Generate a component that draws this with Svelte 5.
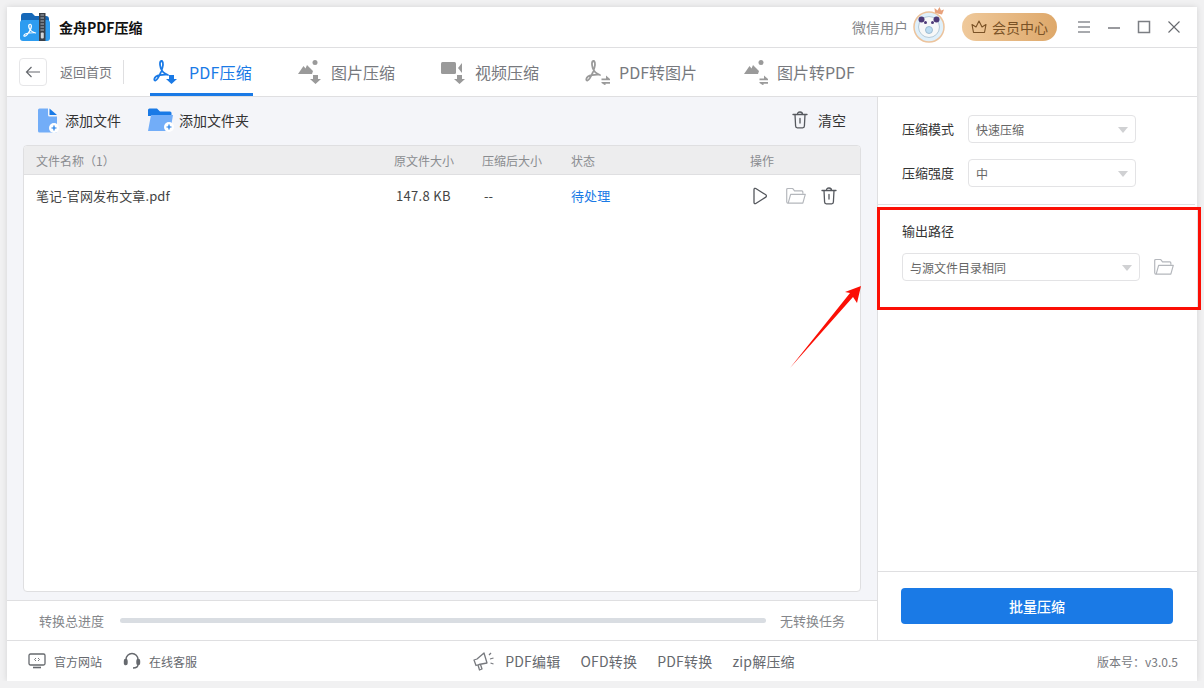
<script lang="ts">
  const tabs = [
    { label: "PDF压缩", icon: "pdf-down", active: true },
    { label: "图片压缩", icon: "img-down" },
    { label: "视频压缩", icon: "video-down" },
    { label: "PDF转图片", icon: "pdf-swap" },
    { label: "图片转PDF", icon: "img-swap" },
  ];
  // adobe-style squiggle, shared by the tab icons and the logo
  const acrobat = "M9.500 2c-1.800 0-2 3.500-.8 7 1 3 3 5.500 7.300 7M10 2c1.500 1.500 1 6-1 11-2 4.500-3.500 8-5.500 8.500-1.800.3-1.500-2.500.5-4 2.500-1.500 6-2 11-1.800";
  const links = ["PDF编辑", "OFD转换", "PDF转换", "zip解压缩"];
</script>

{#snippet folderOutline(w)}
  <svg width={w} height={w * 0.8} viewBox="0 0 22 18" fill="none" stroke="#b4b7bc" stroke-width="1.200" stroke-linejoin="round">
    <path d="M3 16.500a1.500 1.500 0 0 1-1.500-1.500V2.500a1 1 0 0 1 1-1h5l2 2.500h7.500a1 1 0 0 1 1 1v2"/>
    <path d="M3 16.500 5.500 7.500h15l-2.500 9z"/>
  </svg>
{/snippet}

{#snippet trash()}
  <svg width="16" height="18" viewBox="0 0 16 18" fill="none" stroke="#55585e" stroke-width="1.300" stroke-linecap="round" stroke-linejoin="round">
    <path d="M1 3.500h14M5.500 3.500c0-1.500.6-2.500 2.500-2.500s2.500 1 2.500 2.500M3 3.500l.6 11.500c0 1 .8 1.800 1.700 1.800h5.400c.9 0 1.700-.8 1.700-1.800L13 3.500M8 7.500v4.500"/>
  </svg>
{/snippet}

{#snippet tabIcon(kind, color)}
  <svg width="28" height="26" viewBox="0 0 28 26" fill="none">
    {#if kind === "pdf-down" || kind === "pdf-swap"}
      <path d={acrobat} stroke={color} stroke-width="1.800" stroke-linecap="round"/>
    {:else if kind === "img-down" || kind === "img-swap"}
      <path d="M2 15 7.500 7l2 2.500L11 6l6 6-1 3z" fill={color}/>
      <circle cx="19" cy="3.500" r="2.500" fill={color}/>
    {:else}
      <rect x="1" y="3" width="15" height="12" rx="1.500" fill={color}/>
      <path d="M18 9l4-5v10z" fill={color}/>
    {/if}
    {#if kind.endsWith("down")}
      <path d="M17 16h5v4h3l-5.500 5-5.500-5h3z" fill={color}/>
    {:else}
      <path d="M22 16.500l4 3.500v1.300h-8.500V19.500H22zM17.500 23h8.500v1.800h-4.500v1.700l-4-2.500z" fill={color}/>
    {/if}
  </svg>
{/snippet}

<div class="window">
  <header class="titlebar">
    <svg class="logo" width="32" height="30" viewBox="0 0 32 30">
      <path d="M2 4a3 3 0 0 1 3-3h8l3 3h11a3 3 0 0 1 3 3v4H2z" fill="#1668b8"/>
      <rect x="1" y="8" width="30" height="21" rx="3" fill="#2d9cf0"/>
      <path d={acrobat} stroke="#fff" stroke-width="1.600" fill="none" stroke-linecap="round" transform="translate(3 11) scale(.85 .62)"/>
      <rect x="20" y="1" width="6.500" height="28" fill="#3a4048"/>
      <path d="M21.500 3h3.500M21.500 6h3.500M21.500 9h3.500M21.500 12h3.500M21.500 15h3.500M21.500 18h3.500" stroke="#aab2bb" stroke-width="1.200"/>
      <rect x="21.800" y="20.500" width="3" height="6" rx="1" fill="#cfd5da"/>
    </svg>
    <span class="app-name">金舟PDF压缩</span>
    <span class="spacer"></span>
    <span class="user">微信用户</span>
    <svg class="avatar" width="36" height="36" viewBox="0 0 36 36">
      <path d="M24 6l-.5-5 3 2.500L28.500 0l1.500 3.500 3-1-2 5z" fill="#e8a27c"/>
      <circle cx="18" cy="20" r="15" fill="#dff0fb" stroke="#ecc39c" stroke-width="1.500"/>
      <circle cx="18" cy="20" r="10.500" fill="#f7f8f8" stroke="#b5cad8"/>
      <circle cx="10.500" cy="12.500" r="3" fill="#4d3a78"/>
      <circle cx="25.500" cy="12.500" r="3" fill="#4d3a78"/>
      <circle cx="14.500" cy="15.500" r="1.500" fill="#4d3a78"/>
      <circle cx="21.500" cy="15.500" r="1.500" fill="#4d3a78"/>
      <circle cx="18" cy="23" r="3.500" fill="#bcdcf2" stroke="#8fb1c9" stroke-width=".8"/>
    </svg>
    <button class="vip">
      <svg width="16" height="14" viewBox="0 0 16 14" fill="none" stroke="#7a5226" stroke-width="1.100" stroke-linejoin="round">
        <path d="M2.500 12.500 1 4.500l4 2.500L8 1l3 6 4-2.500-1.500 8z"/>
      </svg>
      会员中心
    </button>
    <div class="win-controls">
      <svg width="14" height="14" viewBox="0 0 14 14" stroke="#8c8f94" stroke-width="1.500"><path d="M1 2h12M1 7h12M1 12h12"/></svg>
      <svg width="14" height="14" viewBox="0 0 14 14" stroke="#55585e" stroke-width="1.200"><path d="M1 8h12"/></svg>
      <svg width="14" height="14" viewBox="0 0 14 14" fill="none" stroke="#7b7e83" stroke-width="1.500"><rect x="1.500" y="1.500" width="11" height="11"/></svg>
      <svg width="14" height="14" viewBox="0 0 14 14" stroke="#66696e" stroke-width="1.100"><path d="M1.500 1.500l11 11M12.500 1.500l-11 11"/></svg>
    </div>
  </header>

  <nav class="navbar">
    <button class="back" aria-label="返回首页">
      <svg width="16" height="12" viewBox="0 0 16 12" fill="none" stroke="#66696e" stroke-width="1.200"><path d="M15 6H1.500M6.500 1 1.500 6l5 5"/></svg>
    </button>
    <span class="back-label">返回首页</span>
    <div class="tabs">
      {#each tabs as tab}
        <div class="tab" class:active={tab.active}>
          {@render tabIcon(tab.icon, tab.active ? "#1a7ae6" : "#9a9a9a")}
          <span>{tab.label}</span>
        </div>
      {/each}
    </div>
  </nav>

  <div class="body">
    <main class="left">
      <div class="toolbar">
        <button class="tool first">
          <svg width="22" height="25" viewBox="0 0 22 25">
            <path d="M1 2a1.500 1.500 0 0 1 1.500-1.500H11V7a1.500 1.500 0 0 0 1.500 1.500H20V23a1.500 1.500 0 0 1-1.500 1.500h-16A1.500 1.500 0 0 1 1 23z" fill="#72adf8"/>
            <path d="M12.500.5 20 7h-7.500z" fill="#1a7ae6"/>
            <circle cx="17" cy="20" r="5" fill="#fff"/>
            <path d="M14.500 20h5M17 17.500v5" stroke="#1a7ae6" stroke-width="1.200"/>
          </svg>
          添加文件
        </button>
        <button class="tool second">
          <svg width="26" height="24" viewBox="0 0 26 24">
            <path d="M0 2a1.500 1.500 0 0 1 1.500-1.500H9l3 3h10a1.500 1.500 0 0 1 1.500 1.500v3H0z" fill="#1a7ae6"/>
            <path d="M3 7h22l-2.500 14.500a1.500 1.500 0 0 1-1.500 1.500H0z" fill="#72adf8"/>
            <circle cx="21" cy="19" r="5" fill="#fff"/>
            <path d="M18.500 19h5M21 16.500v5" stroke="#1a7ae6" stroke-width="1.200"/>
          </svg>
          添加文件夹
        </button>
        <span class="spacer"></span>
        <button class="tool clear">
          {@render trash()}
          清空
        </button>
      </div>

      <section class="table">
        <div class="row head">
          <span class="c-name">文件名称（1）</span>
          <span class="c-size">原文件大小</span>
          <span class="c-after">压缩后大小</span>
          <span class="c-state">状态</span>
          <span class="c-ops">操作</span>
        </div>
        <div class="row item">
          <span class="c-name">笔记-官网发布文章.pdf</span>
          <span class="c-size num">147.8 KB</span>
          <span class="c-after dash">--</span>
          <span class="c-state pending">待处理</span>
          <span class="c-ops icons">
            <svg class="play" width="16" height="18" viewBox="0 0 16 18" fill="none" stroke="#55585e" stroke-width="1.300" stroke-linejoin="round"><path d="M2 2.500c0-1 1-1.500 1.800-1l10 6.300c.8.500.8 1.800 0 2.300l-10 6.400c-.8.500-1.800 0-1.800-1z"/></svg>
            {@render folderOutline(22)}
            {@render trash()}
          </span>
        </div>
      </section>

      <div class="progress">
        <span class="p-label">转换总进度</span>
        <div class="bar"></div>
        <span class="p-state">无转换任务</span>
      </div>
    </main>

    <aside class="side">
      <div class="settings">
        <div class="field">
          <span>压缩模式</span>
          <div class="select short">快速压缩<i class="caret"></i></div>
        </div>
        <div class="field">
          <span>压缩强度</span>
          <div class="select short">中<i class="caret"></i></div>
        </div>
      </div>
      <div class="output">
        <div class="out-label">输出路径</div>
        <div class="out-row">
          <div class="select wide">与源文件目录相同<i class="caret"></i></div>
          {@render folderOutline(22)}
        </div>
      </div>
      <span class="grow"></span>
      <div class="action">
        <button class="primary">批量压缩</button>
      </div>
    </aside>
  </div>

  <footer class="footer">
    <div class="foot-left">
      <span class="foot-link">
        <svg width="18" height="16" viewBox="0 0 18 16" fill="none" stroke="#66696e" stroke-width="1.300"><rect x="1" y="1" width="16" height="11" rx="1.500"/><path d="M5 14.500h8" stroke-width="1.600"/><path d="M8 5 6.500 6.500 8 8M10 5l1.500 1.500L10 8" stroke-width=".9"/></svg>
        官方网站
      </span>
      <span class="foot-link">
        <svg width="18" height="18" viewBox="0 0 18 18" fill="none" stroke="#66696e" stroke-width="1.400"><path d="M3 9V7.500a6 6 0 0 1 12 0V9"/><rect x="1.500" y="7.500" width="2.500" height="5" rx="1.200" fill="#66696e"/><rect x="14" y="7.500" width="2.500" height="5" rx="1.200" fill="#66696e"/><path d="M15 12.500c0 2.500-2 3.500-5 3.500"/></svg>
        在线客服
      </span>
    </div>
    <div class="foot-mid">
      <svg width="22" height="20" viewBox="0 0 22 20" fill="none" stroke="#77797e" stroke-width="1.300" stroke-linejoin="round">
        <path d="M1 9l3-1 7-6 3 10-8 1.500-3 1zM5 14l1.500 5 2.500-1-1.500-4.500M16 4l2-2M17 8l3.500-1M17.500 12l3 1"/>
      </svg>
      {#each links as link}<span>{link}</span>{/each}
    </div>
    <span class="version">版本号：v3.0.5</span>
  </footer>
</div>

<!-- screenshot annotation: red box and arrow sit on top of the app -->
<div class="mark-box"></div>
<svg class="mark-arrow" width="76" height="86" viewBox="0 0 76 86">
  <path d="M2 84 62 9 57 8 73 2 69 19 65 13z" fill="#fb0f05"/>
</svg>

<style>
  :global(body) {
    margin: 0;
    background: #f1f1f2;
    font-family: "Noto Sans CJK SC", "Noto Sans", sans-serif;
  }
  .window {
    box-sizing: border-box;
    width: 1190px;
    height: 674px;
    margin: 7px 0 0 7px;
    background: #fff;
    display: flex;
    flex-direction: column;
    box-shadow: 0 0 6px rgba(0, 0, 0, 0.12);
    color: #333;
    font-size: 13px;
  }
  button {
    font: inherit;
    border: 0;
    background: none;
    padding: 0;
    color: inherit;
  }
  .spacer, .grow { flex: 1; }

  .titlebar {
    height: 40px;
    flex: none;
    display: flex;
    align-items: center;
    padding: 0 16px 0 12px;
    border-bottom: 1px solid #dfdfe1;
  }
  .app-name {
    margin-left: 8px;
    font-size: 14px;
    font-weight: 700;
    color: #111;
  }
  .user { color: #85878b; font-size: 14px; }
  .avatar { margin: -4px 0 0 3px; }
  .vip {
    width: 95px;
    height: 28px;
    margin-left: 15px;
    border-radius: 14px;
    background: linear-gradient(90deg, #efc99b, #dea86a);
    color: #7a5226;
    font-size: 14px;
    display: flex;
    align-items: center;
    justify-content: center;
    gap: 5px;
  }
  .win-controls {
    display: flex;
    gap: 16px;
    margin-left: 20px;
  }

  .navbar {
    height: 48px;
    flex: none;
    display: flex;
    align-items: center;
    padding-left: 12px;
    border-bottom: 1px solid #dfdfe1;
  }
  .back {
    width: 28px;
    height: 28px;
    box-sizing: border-box;
    border: 1px solid #e6e6e8;
    border-radius: 4px;
    display: flex;
    align-items: center;
    justify-content: center;
  }
  .back-label {
    margin-left: 13px;
    padding-right: 11px;
    line-height: 24px;
    color: #77797e;
    border-right: 1px solid #dfdfe1;
  }
  .tabs {
    display: flex;
    align-self: stretch;
    margin-left: 26px;
    gap: 45px;
  }
  .tab {
    display: flex;
    align-items: center;
    gap: 7px;
    font-size: 16px;
    color: #77797e;
    box-sizing: border-box;
    border-bottom: 3px solid transparent;
    padding-top: 3px;
  }
  .tab.active {
    color: #1a7ae6;
    border-bottom-color: #1a7ae6;
    gap: 9px;
    padding-right: 1px;
    padding-left: 2px;
    margin-right: -2px;
    letter-spacing: 0.2px;
  }

  .body {
    flex: 1;
    min-height: 0;
    display: flex;
  }
  .left {
    flex: 1;
    min-width: 0;
    display: flex;
    flex-direction: column;
    background: #f4f5f9;
    border-right: 1px solid #dfdfe1;
  }
  .toolbar {
    height: 48px;
    flex: none;
    box-sizing: border-box;
    display: flex;
    align-items: center;
    padding: 0 31px 2px 30px;
  }
  .tool {
    display: flex;
    align-items: center;
    gap: 6px;
    color: #333;
    font-size: 14px;
  }
  .second { margin-left: 27px; gap: 5px; }
  .clear { gap: 10px; }

  .table {
    flex: 1;
    margin: 0 16px 8px 16px;
    background: #fff;
    border: 1px solid #dfdfe1;
    border-radius: 4px;
    overflow: hidden;
  }
  .row {
    display: grid;
    grid-template-columns: 352px 94px 89px 90px 1fr;
    align-items: center;
    padding-left: 12px;
  }
  .head {
    height: 28px;
    background: #ededee;
    border-bottom: 1px solid #dfdfe1;
    color: #8a8c90;
    font-size: 12px;
  }
  .c-size { padding-left: 6px; }
  .item {
    height: 41px;
    color: #444;
    letter-spacing: 0.1px;
  }
  .num { padding-left: 8px; letter-spacing: 0.3px; }
  .dash { padding-left: 2px; }
  .pending { color: #1a7ae6; }
  .head .c-ops { padding-left: 89px; }
  .icons {
    display: flex;
    align-items: center;
    gap: 14px;
    padding-left: 91px;
  }
  .play { margin-right: 3px; }

  .progress {
    height: 40px;
    flex: none;
    box-sizing: border-box;
    display: flex;
    align-items: center;
    background: #fff;
    border-top: 1px solid #dfdfe1;
    padding: 0 32px;
    color: #85878b;
  }
  .bar {
    flex: 1;
    height: 5px;
    margin: 0 14px 0 16px;
    background: #d9dde2;
    border-radius: 3px;
  }

  .side {
    width: 319px;
    flex: none;
    display: flex;
    flex-direction: column;
  }
  .settings {
    height: 108px;
    padding: 18px 0 0 24px;
    box-sizing: border-box;
    display: flex;
    flex-direction: column;
    gap: 16px;
    margin-right: 2px;
    border-bottom: 1px solid #dfdfe1;
  }
  .field {
    display: flex;
    align-items: center;
    gap: 14px;
  }
  .field > span { margin-top: -2px; }
  .select {
    box-sizing: border-box;
    height: 28px;
    display: flex;
    align-items: center;
    padding-left: 7px;
    border: 1px solid #e3e3e5;
    border-radius: 4px;
    position: relative;
    font-size: 12px;
    color: #666;
  }
  .short { width: 168px; }
  .wide { width: 238px; flex: none; }
  .caret {
    position: absolute;
    right: 7px;
    top: 11px;
    border: 5px solid transparent;
    border-top: 6px solid #d0d1d3;
    border-bottom: 0;
  }
  .output { padding: 16px 20px 0 24px; }
  .out-label { line-height: 20px; }
  .out-row {
    margin-top: 12px;
    display: flex;
    align-items: center;
    gap: 13px;
  }
  .action {
    height: 69px;
    box-sizing: border-box;
    padding: 16px 24px 0 23px;
    border-top: 1px solid #dfdfe1;
  }
  .primary {
    width: 272px;
    height: 36px;
    border-radius: 4px;
    background: #1a7ae6;
    color: #fff;
    font-size: 14px;
    font-weight: 500;
  }

  .footer {
    height: 41px;
    flex: none;
    box-sizing: border-box;
    display: grid;
    grid-template-columns: 1fr auto 1fr;
    align-items: center;
    padding: 0 19px 0 21px;
    border-top: 1px solid #dfdfe1;
    color: #66696e;
    font-size: 12px;
  }
  .foot-left { display: flex; gap: 21px; }
  .foot-link {
    display: flex;
    align-items: center;
    gap: 8px;
  }
  .foot-mid {
    display: flex;
    align-items: center;
    gap: 20px;
    margin-left: 62px;
    font-size: 14px;
    letter-spacing: 0.2px;
  }
  .foot-mid svg { margin-right: -10px; }
  .version {
    justify-self: end;
    font-size: 12px;
    color: #77797e;
  }

  .mark-box {
    position: absolute;
    left: 877px;
    top: 207px;
    width: 324px;
    height: 103px;
    box-sizing: border-box;
    border: 3px solid #fb0f05;
  }
  .mark-arrow {
    position: absolute;
    left: 788px;
    top: 284px;
  }
</style>
